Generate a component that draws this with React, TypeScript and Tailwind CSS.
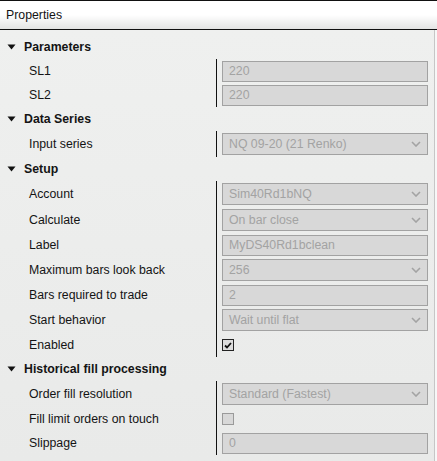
import React from "react";

type Prop =
  | { kind: "text"; label: string; value: string }
  | { kind: "combo"; label: string; value: string }
  | { kind: "check"; label: string; checked: boolean };

const groups: { title: string; props: Prop[] }[] = [
  {
    title: "Parameters",
    props: [
      { kind: "text", label: "SL1", value: "220" },
      { kind: "text", label: "SL2", value: "220" },
    ],
  },
  {
    title: "Data Series",
    props: [{ kind: "combo", label: "Input series", value: "NQ 09-20 (21 Renko)" }],
  },
  {
    title: "Setup",
    props: [
      { kind: "combo", label: "Account", value: "Sim40Rd1bNQ" },
      { kind: "combo", label: "Calculate", value: "On bar close" },
      { kind: "text", label: "Label", value: "MyDS40Rd1bclean" },
      { kind: "combo", label: "Maximum bars look back", value: "256" },
      { kind: "text", label: "Bars required to trade", value: "2" },
      { kind: "combo", label: "Start behavior", value: "Wait until flat" },
      { kind: "check", label: "Enabled", checked: true },
    ],
  },
  {
    title: "Historical fill processing",
    props: [
      { kind: "combo", label: "Order fill resolution", value: "Standard (Fastest)" },
      { kind: "check", label: "Fill limit orders on touch", checked: false },
      { kind: "text", label: "Slippage", value: "0" },
    ],
  },
];

function Chevron() {
  return (
    <svg width="10" height="6" viewBox="0 0 10 6" className="mr-[6px]">
      <path d="M1 1 L5 5 L9 1" fill="none" stroke="#a3a3a3" strokeWidth="1.6" />
    </svg>
  );
}

function Triangle() {
  return (
    <svg width="9" height="6" viewBox="0 0 9 6">
      <path d="M0.5 0.5 L8.5 0.5 L4.5 5.5 Z" fill="#111" />
    </svg>
  );
}

function Value({ p }: { p: Prop }) {
  if (p.kind === "check") {
    return p.checked ? (
      <div className="w-[12px] h-[12px] border border-[#222] bg-[#dcdcdc] flex items-center justify-center">
        <svg width="8" height="7" viewBox="0 0 8 7">
          <path d="M1 3.5 L3 5.5 L7 1" fill="none" stroke="#111" strokeWidth="1.8" />
        </svg>
      </div>
    ) : (
      <div className="w-[12px] h-[12px] border border-[#9a9a9a] bg-[#d8d8d8]" />
    );
  }
  return (
    <div
      className={`${p.kind === "combo" ? "h-[22px]" : "h-[21px]"} w-full border border-[#a2a2a2] bg-[#d8d8d8] flex items-center justify-between pl-[6px] text-[#a3a3a3]`}
    >
      <span>{p.value}</span>
      {p.kind === "combo" && <Chevron />}
    </div>
  );
}

export default function App() {
  return (
    <div
      className="w-[437px] h-[461px] overflow-hidden bg-[#eeefee] text-[12.3px] text-[#141414] flex flex-col"
      style={{ fontFamily: '"Liberation Sans", Arial, sans-serif' }}
    >
      <div className="h-[30px] shrink-0 border-t border-b border-[#111] bg-gradient-to-b from-white via-white to-[#e3e4e3] flex items-center pl-[6px] pr-[1px]">
        Properties
      </div>
      <div className="flex flex-1 min-h-0">
        <div className="flex-1 pt-[5px] bg-gradient-to-b from-[#eff0ef] to-[#e9eae9]">
          {groups.map((g) => (
            <div key={g.title}>
              <div className="h-[24px] flex items-center font-bold">
                <div className="w-[24px] pl-[7px] flex items-center">
                  <Triangle />
                </div>
                <span>{g.title}</span>
              </div>
              {g.props.map((p) => (
                <div
                  key={p.label}
                  className={`grid grid-cols-[216px_1fr] ${p.kind === "combo" ? "h-[26px]" : "h-[24px]"}`}
                >
                  <div className="pl-[29px] flex items-center">{p.label}</div>
                  <div className="border-l border-[#111] pl-[5px] pr-[6px] flex items-center">
                    <Value p={p} />
                  </div>
                </div>
              ))}
            </div>
          ))}
        </div>
        <div className="w-[3px] border-l border-[#c6c6c6] bg-[#f7f7f7]" />
      </div>
    </div>
  );
}
